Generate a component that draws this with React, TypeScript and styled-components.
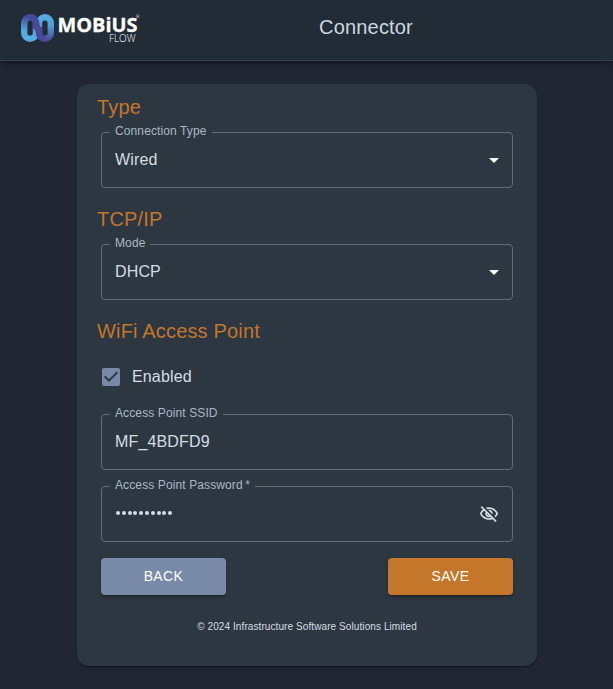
import React from "react";
import styled, { createGlobalStyle } from "styled-components";

const GlobalStyle = createGlobalStyle`
  *, *::before, *::after { box-sizing: border-box; }
  body {
    margin: 0;
    background: #202632;
    color: #d4dde4;
    font-family: "Liberation Sans", Arial, sans-serif;
    overflow: hidden;
  }
`;

const Page = styled.div`
  height: 689px;
  display: flex;
  flex-direction: column;
`;

const Header = styled.header`
  flex: none;
  height: 61px;
  display: grid;
  grid-template-columns: 120px 1fr 0;
  padding-left: 20px;
  background: #222c37;
  border-bottom: 1px solid #35424e;
  box-shadow: 0 2px 4px -1px rgba(0, 0, 0, 0.2), 0 4px 5px rgba(0, 0, 0, 0.14),
    0 1px 10px rgba(0, 0, 0, 0.12);
`;

const LogoSvg = styled.svg`
  display: block;
  width: 124px;
  height: 40px;
  margin-top: 8px;
`;

const Title = styled.h1`
  margin: 0;
  padding: 11px 21px 0 0;
  text-align: center;
  font-size: 20px;
  line-height: 32px;
  font-weight: 400;
  letter-spacing: 0.17px;
  color: #ccd8de;
`;

const Card = styled.form`
  width: 460px;
  height: 582px;
  margin: 23px 0 0 77px;
  padding: 7px 24px 0;
  border-radius: 12px;
  background: #2d3741;
  box-shadow: 0 2px 1px -1px rgba(0, 0, 0, 0.2), 0 1px 1px rgba(0, 0, 0, 0.14),
    0 1px 3px rgba(0, 0, 0, 0.12);
`;

const Heading = styled.h2`
  margin: 0 0 0 -4px;
  height: 41px;
  font-size: 20px;
  line-height: 32px;
  font-weight: 400;
  letter-spacing: 0.17px;
  color: #c4762a;
`;

const Field = styled.fieldset<{ $gap: number }>`
  display: block;
  min-width: 0;
  height: 61px;
  margin: -5px 0 ${(p) => p.$gap}px;
  padding: 0 13px 0 8px;
  border: 1px solid #626c75;
  border-radius: 4px;
`;

const Legend = styled.legend`
  height: 11px;
  padding: 0 5px;
  font-size: 12px;
  line-height: 9px;
  letter-spacing: 0.113px;
  white-space: nowrap;
  color: #a9b8c6;
`;

const Value = styled.div`
  height: 49px;
  padding-left: 5px;
  display: flex;
  align-items: center;
  justify-content: space-between;
  font-size: 16px;
  line-height: 23px;
  letter-spacing: 0.15px;
  color: #d4dde4;
`;

const Text = styled.span`
  display: block;
  padding-bottom: 6px;
`;

const Dots = styled.span`
  display: flex;
  gap: 1.8px;
  padding: 0 0 7px 1px;
`;

const Dot = styled.span`
  width: 4px;
  height: 4px;
  border-radius: 50%;
  background: #d4dde4;
`;

const Caret = styled.svg`
  display: block;
  width: 24px;
  height: 24px;
  margin: 0 -7px 5px 0;
  fill: #fff;
`;

const EyeOff = styled.svg`
  display: block;
  width: 20px;
  height: 20px;
  margin: 0 0 5px;
  fill: #d4dde4;
`;

const CheckRow = styled.label`
  height: 42px;
  margin: 0 0 16px -2px;
  padding-top: 9px;
  display: flex;
  align-items: flex-start;
  gap: 9px;
  font-size: 16px;
  line-height: 24px;
  letter-spacing: 0.15px;
`;

const CheckIcon = styled.svg`
  display: block;
  width: 24px;
  height: 24px;
  fill: #788aa8;
`;

const Actions = styled.div`
  display: flex;
  justify-content: space-between;
`;

const Button = styled.button<{ $color: string }>`
  width: 125px;
  height: 37px;
  padding: 0 0 2px;
  border: 0;
  border-radius: 4px;
  background: ${(p) => p.$color};
  color: #fff;
  font: 400 14px/24px "Liberation Sans", Arial, sans-serif;
  letter-spacing: 0.4px;
  text-transform: uppercase;
  box-shadow: 0 3px 1px -2px rgba(0, 0, 0, 0.2), 0 2px 2px rgba(0, 0, 0, 0.14),
    0 1px 5px rgba(0, 0, 0, 0.12);
`;

const Copyright = styled.p`
  margin: 23px 0 0;
  text-align: center;
  font-size: 10px;
  line-height: 17px;
  letter-spacing: 0.09px;
`;

const Logo = () => (
  <LogoSvg viewBox="20 8 124 40" aria-label="Mobius Flow">
    <defs>
      <linearGradient id="left" gradientUnits="userSpaceOnUse" x1="0" y1="14" x2="0" y2="42">
        <stop offset="0.1" stopColor="#484a99" />
        <stop offset="0.35" stopColor="#4c7cbd" />
        <stop offset="0.6" stopColor="#54a9df" />
        <stop offset="1" stopColor="#55aee3" />
      </linearGradient>
      <linearGradient id="right" gradientUnits="userSpaceOnUse" x1="0" y1="14" x2="0" y2="42">
        <stop offset="0" stopColor="#55aee3" />
        <stop offset="0.4" stopColor="#529fd7" />
        <stop offset="0.7" stopColor="#4c70b4" />
        <stop offset="0.95" stopColor="#484a99" />
      </linearGradient>
    </defs>
    <g fill="none" strokeWidth="6.4">
      <rect x="24.2" y="17.2" width="11.8" height="21.6" rx="5.9" stroke="url(#left)" />
      <rect x="39" y="17.2" width="11.8" height="21.6" rx="5.9" stroke="url(#right)" />
      <path d="M29 17.2h1.1a5.9 5.9 0 0 1 5.9 5.9C36 28 39 28 39 32.9a5.9 5.9 0 0 0 5.9 5.9H46" stroke="#484a99" />
      <path d="M36 23v6M39 27v6" stroke="#484a99" />
    </g>
    <g fill="#fff" fontFamily="'Open Sans', 'Noto Sans', sans-serif">
      <text x="57.5" y="32" fontSize="19.2" fontWeight="700" stroke="#fff" strokeWidth="0.3" textLength="80" lengthAdjust="spacingAndGlyphs">MOBiUS</text>
      <text x="109" y="42" fontSize="11" fontWeight="300" textLength="26.5" lengthAdjust="spacingAndGlyphs">FLOW</text>
      <text x="136" y="17.5" fontSize="4">®</text>
    </g>
  </LogoSvg>
);

const DropDown = () => (
  <Caret viewBox="0 0 24 24"><path d="m7 10 5 5 5-5z" /></Caret>
);

export default function App() {
  return (
    <Page>
      <GlobalStyle />
      <Header>
        <Logo />
        <Title>Connector</Title>
      </Header>
      <Card>
        <Heading>Type</Heading>
        <Field $gap={15}>
          <Legend>Connection Type</Legend>
          <Value><Text>Wired</Text><DropDown /></Value>
        </Field>
        <Heading>TCP/IP</Heading>
        <Field $gap={15}>
          <Legend>Mode</Legend>
          <Value><Text>DHCP</Text><DropDown /></Value>
        </Field>
        <Heading>WiFi Access Point</Heading>
        <CheckRow>
          <CheckIcon viewBox="0 0 24 24">
            <path d="M19 3H5c-1.11 0-2 .9-2 2v14c0 1.1.89 2 2 2h14c1.11 0 2-.9 2-2V5c0-1.1-.89-2-2-2zm-9 14l-5-5 1.41-1.41L10 14.17l7.59-7.59L19 8l-9 9z" />
          </CheckIcon>
          Enabled
        </CheckRow>
        <Field $gap={16}>
          <Legend>Access Point SSID</Legend>
          <Value><Text>MF_4BDFD9</Text></Value>
        </Field>
        <Field $gap={16}>
          <Legend>Access Point Password&thinsp;*</Legend>
          <Value>
            <Dots>{Array.from({ length: 10 }, (_, i) => <Dot key={i} />)}</Dots>
            <EyeOff viewBox="0 0 24 24">
              <path d="M12 6c3.79 0 7.17 2.13 8.82 5.5-.59 1.22-1.42 2.27-2.41 3.12l1.41 1.41c1.39-1.23 2.49-2.77 3.18-4.53C21.27 7.11 17 4 12 4c-1.27 0-2.49.2-3.64.57l1.65 1.65C10.66 6.09 11.32 6 12 6zm-1.07 1.14L13 9.21c.57.25 1.03.71 1.28 1.28l2.07 2.07c.08-.34.14-.7.14-1.07C16.5 9.01 14.48 7 12 7c-.37 0-.72.05-1.07.14zM2.01 3.87l2.68 2.68C3.06 7.83 1.77 9.53 1 11.5 2.73 15.89 7 19 12 19c1.52 0 2.98-.29 4.32-.82l3.42 3.42 1.41-1.41L3.42 2.45 2.01 3.87zm7.5 7.5l2.61 2.61c-.04.01-.08.02-.12.02-1.38 0-2.5-1.12-2.5-2.5 0-.05.01-.08.01-.13zm-3.4-3.4l1.75 1.75c-.23.55-.36 1.15-.36 1.78 0 2.48 2.02 4.5 4.5 4.5.63 0 1.23-.13 1.77-.36l.98.98c-.88.24-1.8.38-2.75.38-3.79 0-7.17-2.13-8.82-5.5.7-1.43 1.72-2.61 2.93-3.53z" />
            </EyeOff>
          </Value>
        </Field>
        <Actions>
          <Button type="button" $color="#788aa8">Back</Button>
          <Button type="button" $color="#c4762a">Save</Button>
        </Actions>
        <Copyright>© 2024 Infrastructure Software Solutions Limited</Copyright>
      </Card>
    </Page>
  );
}
